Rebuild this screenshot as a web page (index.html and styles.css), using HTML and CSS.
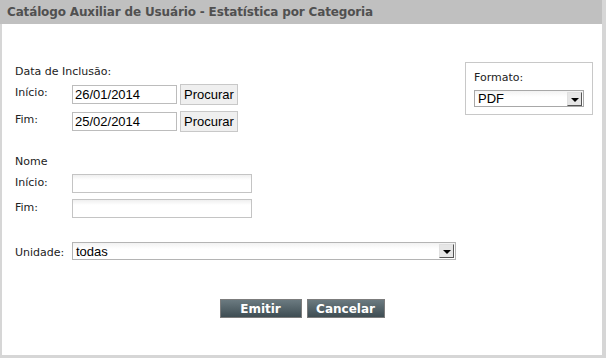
FILE: index.html
```html
<!DOCTYPE html>
<html lang="pt">
<head>
    <meta charset="UTF-8">
    <title>Catálogo Auxiliar de Usuário - Estatística por Categoria</title>
    <link rel="stylesheet" href="styles.css">
</head>
<body>
    <div class="panel">
        <div class="title">Catálogo Auxiliar de Usuário - Estatística por Categoria</div>
        <div class="content">
            <div class="fields">
                <div class="group-title">Data de Inclusão:</div>
                <div class="row">
                    <label>Início:</label>
                    <input type="text" class="date" value="26/01/2014">
                    <button type="button" class="btn-find">Procurar</button>
                </div>
                <div class="row">
                    <label>Fim:</label>
                    <input type="text" class="date" value="25/02/2014">
                    <button type="button" class="btn-find">Procurar</button>
                </div>

                <div class="group-title nome">Nome</div>
                <div class="row small">
                    <label>Início:</label>
                    <input type="text" class="name">
                </div>
                <div class="row small">
                    <label>Fim:</label>
                    <input type="text" class="name">
                </div>

                <div class="row unidade">
                    <label>Unidade:</label>
                    <div class="select wide">
                        <span class="select-text">todas</span>
                        <span class="arrow"></span>
                    </div>
                </div>
            </div>

            <div class="formato">
                <div class="formato-label">Formato:</div>
                <div class="select narrow">
                    <span class="select-text">PDF</span>
                    <span class="arrow"></span>
                </div>
            </div>
        </div>
        <div class="actions">
            <button type="button" class="btn-main emitir">Emitir</button>
            <button type="button" class="btn-main">Cancelar</button>
        </div>
    </div>
</body>
</html>
```

FILE: styles.css
```css
body {
    margin: 0;
    padding: 0;
    background-color: #d6d6d6;
    font-family: "DejaVu Sans", Verdana, sans-serif;
    font-size: 11px;
    color: #222;
}
.panel {
    width: 600px;
    height: 355px;
    margin-left: 2px;
    background: #fff;
}
.title {
    height: 24px;
    line-height: 24px;
    margin-left: -2px;
    padding-left: 7px;
    background: #c0c0c0;
    color: #505050;
    font-weight: bold;
    font-size: 12px;
    letter-spacing: -0.15px;
}
.content {
    display: flex;
    justify-content: space-between;
    align-items: flex-start;
    padding: 38px 9px 0 13px;
}
.fields {
    padding-top: 2px;
}
.group-title {
    height: 16px;
    line-height: 16px;
    margin-bottom: 4px;
}
.group-title.nome {
    margin-top: 22px;
}
.row {
    display: flex;
    align-items: flex-start;
    height: 21px;
    margin-bottom: 6px;
}
.row.small {
    height: 19px;
    margin-bottom: 6px;
}
.row.unidade {
    margin-top: 24px;
}
.row.unidade label {
    padding-top: 3px;
}
.row label {
    width: 57px;
    line-height: 16px;
    padding-top: 1px;
}
input {
    box-sizing: border-box;
    margin: 0;
    padding: 0 2px;
    font-family: "Liberation Sans", Arial, sans-serif;
    font-size: 13px;
    color: #000;
    outline: none;
}
.date {
    width: 105px;
    height: 19px;
    margin-top: 1px;
    border: 1px solid #bcbcbc;
}
.name {
    width: 180px;
    height: 19px;
    border: 1px solid #c4c4c4;
    background: linear-gradient(#efefef, #fff 5px);
}
.btn-find {
    box-sizing: border-box;
    width: 58px;
    height: 21px;
    margin-left: 3px;
    padding: 0;
    border: 1px solid #c8c8c8;
    background: #efefef;
    font-family: "Liberation Sans", Arial, sans-serif;
    font-size: 13px;
    color: #000;
}
.select {
    box-sizing: border-box;
    display: flex;
    align-items: center;
    justify-content: space-between;
    height: 18px;
    border: 1px solid #b4b4b4;
    background: linear-gradient(#f2f2f2, #fff 6px);
    font-family: "Liberation Sans", Arial, sans-serif;
    font-size: 13px;
    color: #000;
}
.select.wide {
    width: 384px;
}
.select.narrow {
    width: 110px;
    height: 17px;
    border-color: #a8a8a8;
}
.select-text {
    padding-left: 3px;
}
.arrow {
    box-sizing: border-box;
    position: relative;
    width: 15px;
    height: 14px;
    margin-right: 1px;
    border: 1px solid #e0e0e0;
    border-right-color: #555;
    border-bottom-color: #555;
    background: #e6e6e6;
}
.arrow::after {
    content: "";
    position: absolute;
    left: 3px;
    top: 5px;
    border-left: 4px solid transparent;
    border-right: 4px solid transparent;
    border-top: 4px solid #000;
}
.formato {
    box-sizing: border-box;
    width: 128px;
    height: 53px;
    padding: 7px 8px 0 8px;
    border: 1px solid #c8c8c8;
}
.formato-label {
    height: 16px;
    line-height: 16px;
    margin-bottom: 4px;
}
.actions {
    display: flex;
    justify-content: center;
    gap: 5px;
    margin-top: 30px;
}
.btn-main {
    box-sizing: border-box;
    width: 78px;
    height: 19px;
    padding: 0;
    border: 1px solid #7c7c7c;
    background: linear-gradient(#6b7a80, #3e4d53);
    color: #fff;
    font-family: "DejaVu Sans", Verdana, sans-serif;
    font-size: 12px;
    font-weight: bold;
    line-height: 16px;
}
.btn-main.emitir {
    width: 82px;
}
```
